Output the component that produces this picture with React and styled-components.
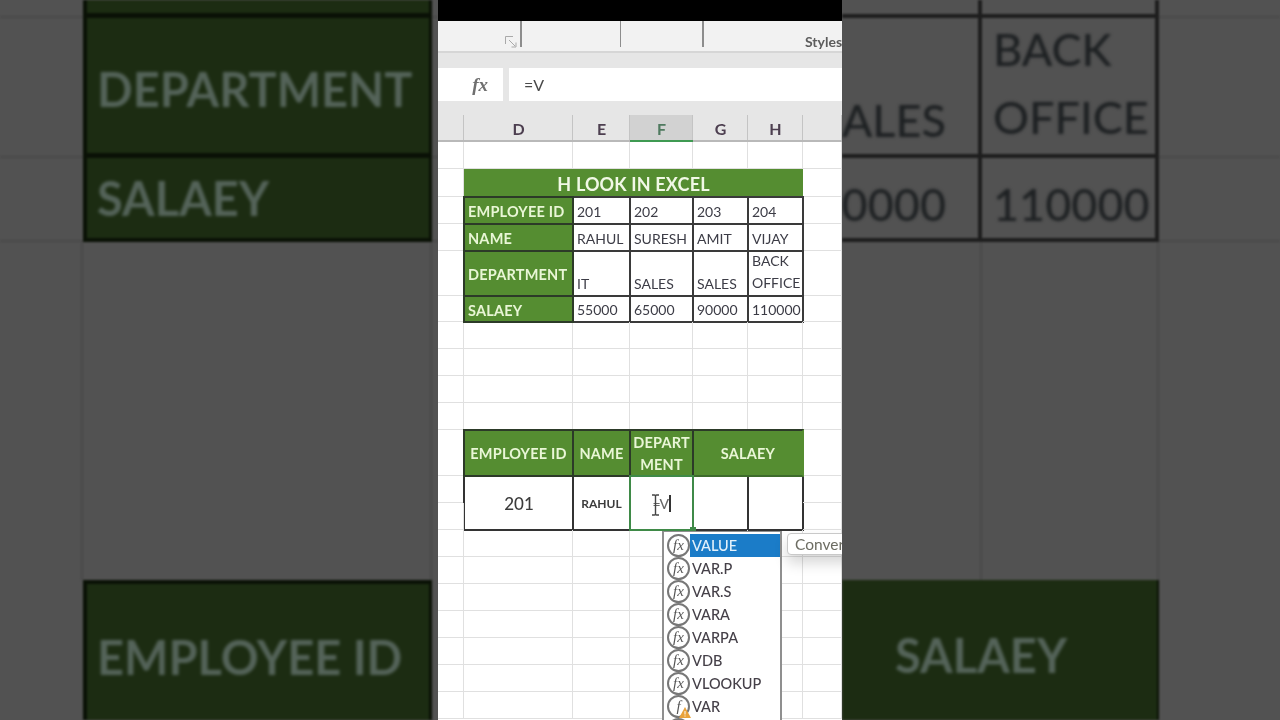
import React from "react";
import styled, { createGlobalStyle } from "styled-components";

const Global = createGlobalStyle`
  html, body { margin: 0; padding: 0; background: #000; }
  * { box-sizing: border-box; }
`;
const Page = styled.div`
  display: flex; width: 1280px; height: 720px; overflow: hidden; background: #525252;
  font-family: Lato, "Open Sans", sans-serif;
`;

/* ---------- blurred side panels ---------- */
const SidePanel = styled.div`
  height: 720px; background: #525252; overflow: hidden; flex: none; width: 438px;
`;
const Side = styled.div`
  display: grid; height: 720px; filter: blur(.9px);
  grid-template-columns: ${p => p.$cols};
  grid-template-rows: 18px 140px 84px 338px 140px;
`;
const SideBlank = styled.div`
  border-bottom: ${p => (p.$line ? "2px solid #494949" : "none")};
  border-right: ${p => (p.$edge ? "2px solid #494949" : "none")};
`;
const SideGreen = styled.div`
  display: flex; align-items: center;
  grid-column: ${p => p.$span || "auto"};
  background: #1c2c12;
  padding: ${p => p.$pad};
  border-style: solid;
  border-color: #0a1106;
  border-width: ${p => p.$borders};
`;
const SideCell = styled.div`
  display: flex; overflow: hidden;
  align-items: flex-end;
  justify-content: ${p => (p.$clip ? "flex-end" : "flex-start")};
  padding: ${p => p.$pad};
  border-bottom: 4px solid #1e1e1e;
  border-right: 4px solid #1e1e1e;
`;
const SideLabel = styled.span`
  font-weight: 700; font-size: 47px; line-height: 1; color: #55645a;
  white-space: nowrap; filter: blur(1.3px);
`;
const SideText = styled.span`
  font-size: 45px; line-height: 68px; color: #1d2022; white-space: pre;
  font-weight: 500; filter: blur(.9px); text-align: left;
`;

/* ---------- centre phone column ---------- */
const Centre = styled.div`
  position: relative; width: 404px; height: 720px; overflow: hidden; flex: none;
  display: flex; flex-direction: column; background: #fff; filter: blur(.4px);
`;
const TopBar = styled.div`height: 21px; background: #000; flex: none;`;
const Ribbon = styled.div`
  height: 32px; flex: none; display: flex; align-items: flex-start;
  background: #f2f2f2; border-bottom: 2px solid #d6d6d6; position: relative;
`;
const RibbonSep = styled.div`
  width: 1.5px; height: 26px; background: #8d8d8d; margin-left: ${p => p.$gap}px; flex: none;
`;
const Launcher = styled.svg`
  width: 12px; height: 12px; margin: 15px 0 0 67px; flex: none;
`;
const RibbonLabel = styled.span`
  position: absolute; left: 367px; top: 13px;
  font-size: 14px; line-height: 16px; font-weight: 700; color: #5c5c5c; white-space: nowrap;
`;
const FormulaBar = styled.div`
  height: 62px; flex: none; display: flex; gap: 6px; padding-top: 15px;
  background: #e6e6e6;
`;
const FxBox = styled.div`
  width: 65px; height: 33px; background: #fff; display: flex; align-items: center;
  justify-content: flex-end; padding-right: 15px;
  font-family: "Liberation Serif", serif; font-style: italic; font-weight: 700;
  font-size: 19px; color: #6f6f6f;
`;
const FormulaInput = styled.div`
  flex: 1; height: 33px; background: #fff; display: flex; align-items: center;
  padding-left: 15px; font-size: 16px; color: #4a4a4a;
`;
const Columns = "26px 109px 57px 63px 55px 55px 39px";
const HeaderRow = styled.div`
  height: 27px; flex: none; display: grid; grid-template-columns: ${Columns};
  background: #e6e6e6; border-bottom: 2px solid #b9b9b9;
`;
const ColHead = styled.div`
  display: flex; align-items: center; justify-content: center; padding: 2px 0 0 1px;
  font-size: 16px; font-weight: 700; color: ${p => (p.$active ? "#4f7a5f" : "#4d3f50")};
  background: ${p => (p.$active ? "#d2d2d2" : "transparent")};
  border-right: 1px solid #c4c4c4;
  box-shadow: ${p => (p.$active ? "0 2px 0 #3f9a52" : "none")};
`;
const Sheet = styled.div`
  position: relative; flex: 1; display: grid;
  grid-template-columns: ${Columns};
  grid-template-rows: 27px 28px 27px 27px 45px 26px 27px 27px 27px 27px 46px 27px 27px 27px 27px 27px 27px 27px 27px 27px;
`;
const Blank = styled.div`
  border-right: 1px solid #e0e0e0; border-bottom: 1px solid #e0e0e0;
`;
const Title = styled.div`
  grid-column: span 5; display: flex; align-items: center; justify-content: center; padding-top: 2px;
  background: #558d31; color: #f1f8e6; font-weight: 700; font-size: 18px; letter-spacing: .15px;
`;
const Label = styled.div`
  margin: -1px; z-index: 1; display: flex; align-items: center; padding: 2px 0 0 3px;
  background: #558d31; color: #e9f6d6; font-weight: 700; font-size: 14.5px; letter-spacing: .2px;
  border: 2px solid #2c3a28; white-space: nowrap;
`;
const Head = styled(Label)`
  grid-column: span ${p => p.$span || 1};
  justify-content: center; padding: 2px 0 0; text-align: center; line-height: 22px;
  white-space: normal;
  ${p => p.$open && "border-right-color: #558d31; border-bottom-color: #3d6b2b;"}
`;
const Value = styled.div`
  margin: -1px; display: flex; align-items: flex-end;
  padding: 0 0 ${p => (p.$wrap ? 1 : 0)}px 3px;
  background: #fff; color: #3c3c46; font-size: 14px; line-height: 22px;
  border: 2px solid #3a3a3a; white-space: ${p => (p.$wrap ? "pre" : "nowrap")};
`;
const Entry = styled.div`
  grid-row: span 2; margin: -1px; display: flex; align-items: center; justify-content: center;
  padding-left: ${p => p.$nudge || 0}px;
  background: #fff; color: #3c3c3c; font-size: ${p => p.$size || 17}px; font-weight: ${p => p.$weight || 500};
  border: 2px solid #333;
`;
const Editing = styled(Entry)`
  position: relative; z-index: 2; border-color: #3f8a48; font-size: 14px; color: #666;
  letter-spacing: -1px; gap: 0;
`;
const Caret = styled.span`display: inline-block; width: 1.5px; height: 17px; background: #333; margin-left: 1px;`;
const IBeam = styled.svg`position: absolute; left: 20px; top: 17px; width: 9px; height: 22px;`;
const Handle = styled.span`
  position: absolute; right: -4px; bottom: -4px; width: 6px; height: 6px; background: #3f8a48;
`;
const Popup = styled.div`
  position: absolute; left: 224px; top: 389px; width: 120px; height: 200px; z-index: 3;
  background: #fff; border: 2px solid #8f8f8f; border-top-width: 1px; padding-top: 2px; overflow: hidden;
`;
const Option = styled.div`
  position: relative; height: 23px; display: flex; align-items: center; padding-left: 28px;
  font-size: 14.5px; font-weight: 500; color: ${p => (p.$sel ? "#e4f1fb" : "#454048")};
`;
const OptionFill = styled.span`
  position: absolute; left: 26px; right: 0; top: 0; bottom: 0; background: #1b7cc8;
`;
const OptionText = styled.span`position: relative;`;
const FxIcon = styled.span`
  position: absolute; left: 3px; top: 0; width: 23px; height: 23px; border-radius: 50%;
  border: 2px solid #777; background: #fff; display: flex; align-items: center; justify-content: center;
  font-family: "Liberation Serif", serif; font-style: italic; font-size: 15px; color: #555; z-index: 1;
`;
const Warn = styled.svg`position: absolute; left: 15px; top: 12px; width: 12px; height: 11px; z-index: 2;`;
const Tip = styled.div`
  position: absolute; left: 349px; top: 391px; width: 80px; height: 22px; z-index: 3;
  display: flex; align-items: center; padding-left: 7px;
  background: #fff; border: 1px solid #c9c9c9; border-radius: 4px;
  font-size: 15.5px; color: #6c6c62; white-space: nowrap;
  box-shadow: 0 8px 14px rgba(0,0,0,.16);
`;

const blanks = n => Array.from({ length: n }, (_, i) => <Blank key={i} />);

const options = ["VALUE", "VAR.P", "VAR.S", "VARA", "VARPA", "VDB", "VLOOKUP", "VAR", ""];

export default function App() {
  return (
    <Page>
      <Global />
      <SidePanel>
        <Side $cols="83px 349px 6px">
          <SideBlank $line /><SideGreen $borders="0 3px 5px 4px" /><SideBlank $line />
          <SideBlank $line />
          <SideGreen $borders="0 3px 5px 4px" $pad="8px 0 0 10px"><SideLabel>DEPARTMENT</SideLabel></SideGreen>
          <SideBlank $line />
          <SideBlank $line />
          <SideGreen $borders="0 3px 4px 4px" $pad="0 0 0 10px"><SideLabel>SALAEY</SideLabel></SideGreen>
          <SideBlank $line />
          <SideBlank $edge /><SideBlank $edge /><SideBlank />
          <SideBlank />
          <SideGreen $borders="4px 3px 0 4px" $pad="10px 0 0 10px"><SideLabel>EMPLOYEE ID</SideLabel></SideGreen>
          <SideBlank />
        </Side>
      </SidePanel>

      <Centre>
        <TopBar />
        <Ribbon>
          <Launcher viewBox="0 0 12 12" fill="none" stroke="#a9a9a9" strokeWidth="1">
            <path d="M.5 8V.5H8M4 4l6 6M6.5 11H11V6.5" />
          </Launcher>
          <RibbonSep $gap={3} />
          <RibbonSep $gap={98} />
          <RibbonSep $gap={81} />
          <RibbonLabel>Styles</RibbonLabel>
        </Ribbon>
        <FormulaBar>
          <FxBox>fx</FxBox>
          <FormulaInput>=V</FormulaInput>
        </FormulaBar>
        <HeaderRow>
          <ColHead />
          <ColHead>D</ColHead>
          <ColHead>E</ColHead>
          <ColHead $active>F</ColHead>
          <ColHead>G</ColHead>
          <ColHead>H</ColHead>
          <ColHead />
        </HeaderRow>
        <Sheet>
          {blanks(7)}
          <Blank /><Title>H LOOK IN EXCEL</Title><Blank />

          <Blank /><Label>EMPLOYEE ID</Label><Value>201</Value><Value>202</Value><Value>203</Value><Value>204</Value><Blank />
          <Blank /><Label>NAME</Label><Value>RAHUL</Value><Value>SURESH</Value><Value>AMIT</Value><Value>VIJAY</Value><Blank />
          <Blank /><Label>DEPARTMENT</Label><Value>IT</Value><Value>SALES</Value><Value>SALES</Value><Value $wrap>{"BACK\nOFFICE"}</Value><Blank />
          <Blank /><Label>SALAEY</Label><Value>55000</Value><Value>65000</Value><Value>90000</Value><Value>110000</Value><Blank />

          {blanks(28)}

          <Blank /><Head>EMPLOYEE ID</Head><Head>NAME</Head><Head>DEPART MENT</Head><Head $span={2} $open>SALAEY</Head><Blank />
          <Blank />
          <Entry $nudge={1}>201</Entry>
          <Entry $size={12} $weight={700}>RAHUL</Entry>
          <Editing>
            =V<Caret />
            <IBeam viewBox="0 0 9 22" fill="none" stroke="#444" strokeWidth="1.4">
              <path d="M1 1h2.5c.6 0 1 .4 1 1v18c0 .6-.4 1-1 1H1M8 1H5.5c-.6 0-1 .4-1 1M8 21H5.5c-.6 0-1-.4-1-1" />
            </IBeam>
            <Handle />
          </Editing>
          <Entry /><Entry /><Blank />
          <Blank /><Blank />
          {blanks(49)}

          <Popup>
            {options.map((name, i) => (
              <Option key={i} $sel={i === 0}>
                {i === 0 && <OptionFill />}
                <FxIcon>{i === 7 ? "f" : i === 8 ? "" : "fx"}</FxIcon>
                {i === 7 && (
                  <Warn viewBox="0 0 12 11">
                    <path d="M6 0l6 11H0z" fill="#e9a23b" />
                    <path d="M6 4v3.5M6 8.5v1" stroke="#fff" strokeWidth="1" />
                  </Warn>
                )}
                <OptionText>{name}</OptionText>
              </Option>
            ))}
          </Popup>
          <Tip>Converts a text</Tip>
        </Sheet>
      </Centre>

      <SidePanel>
        <Side $cols="140px 177px 121px">
          <SideCell /><SideCell /><SideBlank $line />
          <SideCell $clip $pad="0 32px 0 0"><SideText>SALES</SideText></SideCell>
          <SideCell $pad="0 0 3px 11px"><SideText>{"BACK\nOFFICE"}</SideText></SideCell>
          <SideBlank $line />
          <SideCell $clip $pad="0 32px 0 0"><SideText>90000</SideText></SideCell>
          <SideCell $pad="0 0 0 11px"><SideText>110000</SideText></SideCell>
          <SideBlank $line />
          <SideBlank $edge /><SideBlank $edge /><SideBlank />
          <SideGreen $span="span 2" $borders="0 2px 0 0" $pad="10px 0 0 53px"><SideLabel>SALAEY</SideLabel></SideGreen>
          <SideBlank />
        </Side>
      </SidePanel>
    </Page>
  );
}
